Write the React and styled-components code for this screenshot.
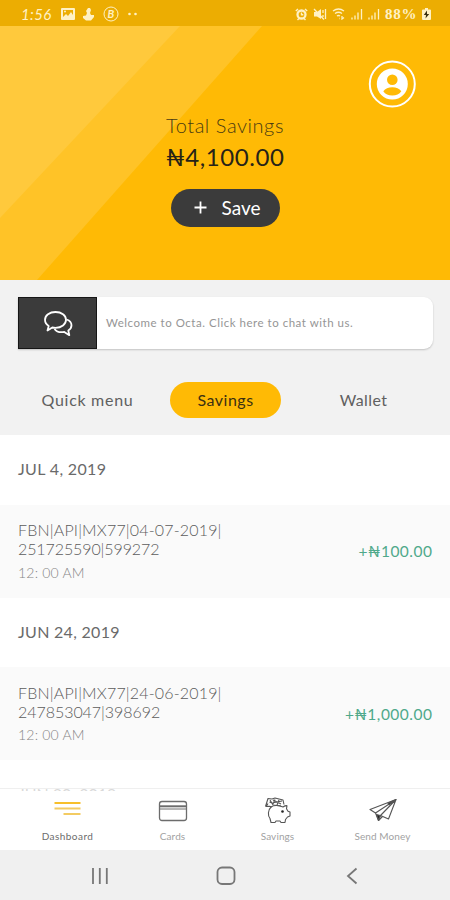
import React from 'react';
import styled, { createGlobalStyle } from 'styled-components';

const GlobalStyle = createGlobalStyle`
	* {
		box-sizing: border-box;
	}
	body {
		margin: 0;
		font-family: Lato, 'Open Sans', sans-serif;
		background: #fff;
	}
`;

const Screen = styled.div`
	width: 450px;
	height: 900px;
	display: flex;
	flex-direction: column;
	overflow: hidden;
	background: #fff;
`;

const StatusBar = styled.div`
	height: 26px;
	flex: none;
	display: flex;
	align-items: center;
	justify-content: space-between;
	padding: 2px 19px 0 21px;
	background: #ecad02;
	color: #fff1c4;
`;
const StatusGroup = styled.div`
	display: flex;
	align-items: center;
	gap: ${props => props.$gap}px;
`;
const Clock = styled.span`
	font-size: 15px;
	font-style: italic;
	letter-spacing: 0.4px;
	margin-right: 1px;
`;
const Battery = styled.span`
	font-family: 'Liberation Serif', serif;
	font-weight: bold;
	font-size: 15px;
	letter-spacing: 0.7px;
	width: 32px;
	white-space: nowrap;
`;

const Hero = styled.div`
	height: 254px;
	flex: none;
	position: relative;
	display: flex;
	flex-direction: column;
	align-items: center;
	padding-top: 86px;
	background: #ffba05;
`;
const Band = styled.div`
	position: absolute;
	inset: 0;
	background: ${props => props.color};
	clip-path: polygon(${props => props.$shape});
`;
const Avatar = styled.div`
	position: absolute;
	top: 34px;
	right: 34px;
	width: 48px;
	height: 48px;
`;
const HeroTitle = styled.div`
	position: relative;
	font-size: 20px;
	font-weight: 300;
	line-height: 26px;
	letter-spacing: 0.55px;
	color: #4a3b12;
`;
const Balance = styled.div`
	position: relative;
	font-size: 24px;
	line-height: 32px;
	margin-top: 3px;
	letter-spacing: 0.55px;
	color: #262318;
`;
const SaveButton = styled.button`
	position: relative;
	display: flex;
	align-items: center;
	gap: 15px;
	width: 109px;
	height: 38px;
	margin-top: 16px;
	padding: 0 0 2px 23px;
	border: none;
	border-radius: 19px;
	background: #3b3b3b;
	color: #fff;
	font-family: inherit;
	font-size: 19px;
`;

const Menu = styled.div`
	height: 155px;
	flex: none;
	padding: 17px 17px 0 18px;
	background: #f2f2f2;
`;
const ChatCard = styled.div`
	display: flex;
	align-items: center;
	height: 52px;
	border-radius: 0 9px 9px 0;
	background: #fff;
	box-shadow: 0 1px 2px rgba(0, 0, 0, 0.2);
`;
const ChatIcon = styled.div`
	width: 79px;
	height: 52px;
	display: flex;
	align-items: center;
	justify-content: center;
	padding-top: 2px;
	border: 1px solid #161616;
	background: #3b3b3b;
`;
const ChatText = styled.span`
	margin-left: 9px;
	padding-bottom: 1px;
	font-size: 11.5px;
	letter-spacing: 0.52px;
	color: #959595;
`;
const Tabs = styled.div`
	display: flex;
	margin: 33px -1px 0 0;
`;
const Tab = styled.div`
	width: ${props => props.$width}px;
	height: 36px;
	display: flex;
	align-items: center;
	justify-content: center;
	margin-left: ${props => props.$left || 0}px;
	padding-bottom: 2px;
	border-radius: 18px;
	background: ${props => (props.$active ? '#ffba05' : 'transparent')};
	color: ${props => (props.$active ? '#3b3012' : '#606060')};
	font-size: 16px;
	letter-spacing: ${props => props.$spacing}px;
`;

const List = styled.div`
	flex: 1;
	min-height: 0;
	margin-bottom: -3px;
	overflow: hidden;
`;
const DateRow = styled.div`
	height: 69.5px;
	padding: 0 18px;
	line-height: 67.5px;
	font-size: 16px;
	letter-spacing: ${props => props.$spacing}px;
	color: #6a6a6a;
`;
const Entry = styled.div`
	height: 93px;
	display: flex;
	align-items: center;
	justify-content: space-between;
	padding: 0 18px;
	background: #fafafa;
`;
const Reference = styled.div`
	position: relative;
	top: -0.5px;
	font-size: 16px;
	line-height: 19px;
	font-weight: 300;
	letter-spacing: ${props => props.$spacing}px;
	color: #5c5c5c;
`;
const Time = styled.div`
	margin-top: 5px;
	font-size: 14px;
	line-height: 18px;
	font-weight: 300;
	letter-spacing: 0.2px;
	color: #858585;
`;
const Amount = styled.div`
	font-size: 15.5px;
	letter-spacing: 0.5px;
	margin-right: -0.5px;
	color: #4fa98a;
`;

const BottomNav = styled.div`
	position: relative;
	height: 62px;
	flex: none;
	display: grid;
	grid-template-columns: repeat(4, 105px);
	padding-left: 15px;
	border-top: 1px solid #efefef;
	background: rgba(255, 255, 255, 0.75);
`;
const NavItem = styled.div`
	display: flex;
	flex-direction: column;
	align-items: center;
	padding-top: 7px;
	font-size: 10px;
	line-height: 14px;
	letter-spacing: ${props => (props.$active ? 0.45 : 0.1)}px;
	color: ${props => (props.$active ? '#6c6c6c' : '#a2a2a2')};

	svg {
		margin-bottom: 5px;
	}
`;
const SystemBar = styled.div`
	height: 50px;
	flex: none;
	display: flex;
	align-items: center;
	justify-content: space-between;
	padding: 2px 89px 0 90px;
	background: #f0f0f0;
`;

const PhotoIcon = () => (
	<svg width="14" height="12" viewBox="0 0 14 12">
		<path fill="#fff1c4" fillRule="evenodd" d="M1 0h12q1 0 1 1v10q0 1-1 1H1q-1 0-1-1V1q0-1 1-1zm1 2v7l3-3 2 2 3-4 2 3V2z" />
		<circle cx="4" cy="3.6" r="1" fill="#fff1c4" />
	</svg>
);

const HandIcon = () => (
	<svg width="12" height="13" viewBox="0 0 12 13" fill="#fff1c4">
		<path d="M5 0h2l1 2-1 3 1 2 3 0v2l-3 3.500H3L0 10V8l3-.5L4 5 3 3z" />
	</svg>
);

const CoinIcon = () => (
	<svg width="16" height="16" viewBox="0 0 16 16">
		<circle cx="8" cy="8" r="7" fill="none" stroke="#fff1c4" strokeWidth="1" />
		<text x="4.500" y="12" fontSize="11" fontWeight="bold" fontStyle="italic" fill="#fff1c4">B</text>
	</svg>
);

const DotsIcon = () => (
	<svg width="11" height="4" viewBox="0 0 11 4" fill="#fff1c4">
		<circle cx="2.500" cy="2" r="1.300" />
		<circle cx="8.500" cy="2" r="1.300" />
	</svg>
);

const AlarmIcon = () => (
	<svg width="13" height="13" viewBox="0 0 13 13" fill="none" stroke="#fff1c4">
		<circle cx="6.500" cy="6.500" r="4" strokeWidth="2.300" />
		<path d="M6.500 4.500v2.300h1.800M.8 3L3 1M12.200 3L10 1M2.500 12L4 10.500M10.500 12L9 10.500" strokeWidth="1.400" />
	</svg>
);

const MuteIcon = () => (
	<svg width="14" height="13" viewBox="0 0 14 13">
		<path d="M1 4h3l4-3v10L4 8.500H1z" fill="#fff1c4" />
		<path d="M1 1l10 10.500M10 2v3M12.500 1v10M10 7v2" stroke="#fff1c4" strokeWidth="1.300" fill="none" />
	</svg>
);

const WifiIcon = () => (
	<svg width="14" height="12" viewBox="0 0 14 12" fill="none" stroke="#fff1c4" strokeWidth="1.300">
		<path d="M1 3q5.500-4 11 0M3 5.500q3.500-2.500 7 0M5 8q1.500-1 3 0M7 10.500h.5M10 8v3l2-1.500" />
	</svg>
);

const SignalIcon = () => (
	<svg width="12" height="12" viewBox="0 0 12 12" stroke="#fff1c4" strokeWidth="1.300">
		<path d="M1 11.500v-2M4 11.500v-4M7 11.500V4.500M10.500 11.500V1" />
	</svg>
);

const BatteryIcon = () => (
	<svg width="9" height="12" viewBox="0 0 9 12">
		<path d="M3 0h3v1.500h2q1 0 1 1V11q0 1-1 1H1q-1 0-1-1V2.500q0-1 1-1h2z" fill="#fff1c4" />
		<path d="M5 2.500L1.800 7H4l-.5 3.500L7.200 6H5z" fill="#3b3012" />
	</svg>
);

const ProfileIcon = () => (
	<svg width="48" height="48" viewBox="0 0 48 48">
		<circle cx="24.300" cy="24" r="22.500" fill="none" stroke="#fff" strokeWidth="2" />
		<circle cx="24.300" cy="24" r="15.500" fill="#fff" />
		<circle cx="24.300" cy="19.700" r="5.300" fill="#ffba05" />
		<path d="M15.300 31.200q3-4 9-4t9 4q-3 4.300-9 4.300t-9-4.300z" fill="#ffba05" />
	</svg>
);

const PlusIcon = () => (
	<svg width="13" height="13" viewBox="0 0 13 13" stroke="#fff" strokeWidth="1.800">
		<path d="M6.500 .5v12M.5 6.500h12" />
	</svg>
);

const BubblesIcon = () => (
	<svg width="30" height="28" viewBox="0 0 30 28" fill="none" stroke="#fff" strokeWidth="1.800" strokeLinejoin="round">
		<path d="M12.500 2C6.500 2 2 5.400 2 9.800c0 2.600 1.400 4.800 3.700 6.200L4.500 20.500l4.800-3c1 .2 2 .3 3.200.3 6 0 10.500-3.500 10.500-8S18.500 2 12.500 2z" />
		<path d="M23.500 9.500c3 1 5 3.200 5 5.800 0 2.200-1.200 4-3.200 5.200l1 4.700-5-3.300c-4 .7-8-.4-9.800-3" />
	</svg>
);

const DashboardIcon = () => (
	<svg width="27" height="28" viewBox="0 0 27 28">
		<path d="M.5 7h26" stroke="#f7bf2b" strokeWidth="2" />
		<path d="M.5 12.500h26M9.500 18h17" stroke="#f3cb62" strokeWidth="2" />
	</svg>
);

const CardIcon = () => (
	<svg width="30" height="28" viewBox="0 0 30 28" fill="none" stroke="#6c6c6c" strokeWidth="1.300">
		<rect x="1.500" y="5.500" width="27" height="19" rx="2.500" />
		<path d="M2 10.300h26" strokeWidth="2" />
		<path d="M2 13h26" strokeWidth="1" />
	</svg>
);

const PiggyIcon = () => (
	<svg width="28" height="28" viewBox="0 0 28 28" fill="none" stroke="#555" strokeWidth="1.100" strokeLinejoin="round">
		<path d="M7 11c3-2 8-1.500 12 0 1.500-1 3-1.500 4-1.300l-.5 3 1.500 2.500 2 .8v4l-2.500 1-2 2.500-.5 3h-4l-1-1.500h-4L11 26.500H7L6 22.500c-2.500-3-2-8.500 1-11.500z" />
		<path d="M1.500 10.500l2.500-8L8 3l3-1 8 2 1 4.500M1.500 10.500l4-.3L8 11M4 7.500L2.500 10M6 4l3 5 8 1M9 4l8 4M8 7l10-2M11 3.500L9 8M15 4l-2 5M5.500 6L8 7" />
		<circle cx="18.500" cy="15.500" r="1.300" fill="#222" stroke="none" />
	</svg>
);

const PlaneIcon = () => (
	<svg width="30" height="28" viewBox="0 0 30 28" fill="none" stroke="#555" strokeWidth="1.100" strokeLinejoin="round">
		<path d="M28 3.500L2 13.500 7.500 17 28 3.500 20.500 23 12.500 19.500M7.500 17l3 7.500 2-5L28 3.500" />
		<path d="M28 3.500l-8 3.700 1 1.500zM8.500 18.500l2 6 1.700-5z" fill="#222" />
		<path d="M10.500 24.500l4-4" />
	</svg>
);

const RecentsIcon = () => (
	<svg width="19" height="18" viewBox="0 0 19 18" stroke="#777" strokeWidth="1.800">
		<path d="M3 1v16M9.800 1v16M16.800 1v16" />
	</svg>
);

const HomeIcon = () => (
	<svg width="20" height="20" viewBox="0 0 20 20" fill="none" stroke="#777" strokeWidth="1.800">
		<rect x="1.500" y="1.500" width="17" height="16.500" rx="4.500" />
	</svg>
);

const BackIcon = () => (
	<svg width="18" height="18" viewBox="0 0 18 18" fill="none" stroke="#777" strokeWidth="1.800">
		<path d="M13.500 1.500L5 9l8.500 7.500" />
	</svg>
);

const savings = [
	{
		date: 'JUL 4, 2019',
		spacing: 0.35,
		lines: [['FBN|API|MX77|04-07-2019|', 0.17], ['251725590|599272', -0.1]],
		time: '12: 00 AM',
		amount: '+₦100.00'
	},
	{
		date: 'JUN 24, 2019',
		spacing: 0.3,
		lines: [['FBN|API|MX77|24-06-2019|', 0.17], ['247853047|398692', -0.05]],
		time: '12: 00 AM',
		amount: '+₦1,000.00'
	},
	{ date: 'JUN 20, 2019', spacing: 0, lines: [], time: '', amount: '' }
];

const App = () => {
	return (
		<Screen>
			<GlobalStyle />
			<StatusBar>
				<StatusGroup $gap={8}>
					<Clock>1:56</Clock>
					<PhotoIcon />
					<HandIcon />
					<CoinIcon />
					<DotsIcon />
				</StatusGroup>
				<StatusGroup $gap={5}>
					<AlarmIcon />
					<MuteIcon />
					<WifiIcon />
					<SignalIcon />
					<SignalIcon />
					<Battery>88%</Battery>
					<BatteryIcon />
				</StatusGroup>
			</StatusBar>

			<Hero>
				<Band color="#ffc327" $shape="0 0, 262px 0, 37px 254px, 0 254px" />
				<Band color="#ffc93c" $shape="0 0, 180px 0, 0 192px" />
				<Avatar>
					<ProfileIcon />
				</Avatar>
				<HeroTitle>Total Savings</HeroTitle>
				<Balance>₦4,100.00</Balance>
				<SaveButton>
					<PlusIcon />
					Save
				</SaveButton>
			</Hero>

			<Menu>
				<ChatCard>
					<ChatIcon>
						<BubblesIcon />
					</ChatIcon>
					<ChatText>Welcome to Octa. Click here to chat with us.</ChatText>
				</ChatCard>
				<Tabs>
					<Tab $width={139} $spacing={0.7}>Quick menu</Tab>
					<Tab $active $width={111} $left={13} $spacing={0.5}>Savings</Tab>
					<Tab $width={111} $left={27} $spacing={0.4}>Wallet</Tab>
				</Tabs>
			</Menu>

			<List>
				{savings.map(item => (
					<div key={item.date}>
						<DateRow $spacing={item.spacing}>{item.date}</DateRow>
						{item.lines.length > 0 && (
							<Entry>
								<div>
									{item.lines.map(([text, spacing]) => (
										<Reference key={text} $spacing={spacing}>{text}</Reference>
									))}
									<Time>{item.time}</Time>
								</div>
								<Amount>{item.amount}</Amount>
							</Entry>
						)}
					</div>
				))}
			</List>

			<BottomNav>
				<NavItem $active>
					<DashboardIcon />
					Dashboard
				</NavItem>
				<NavItem>
					<CardIcon />
					Cards
				</NavItem>
				<NavItem>
					<PiggyIcon />
					Savings
				</NavItem>
				<NavItem>
					<PlaneIcon />
					Send Money
				</NavItem>
			</BottomNav>
			<SystemBar>
				<RecentsIcon />
				<HomeIcon />
				<BackIcon />
			</SystemBar>
		</Screen>
	);
};

export default App;
